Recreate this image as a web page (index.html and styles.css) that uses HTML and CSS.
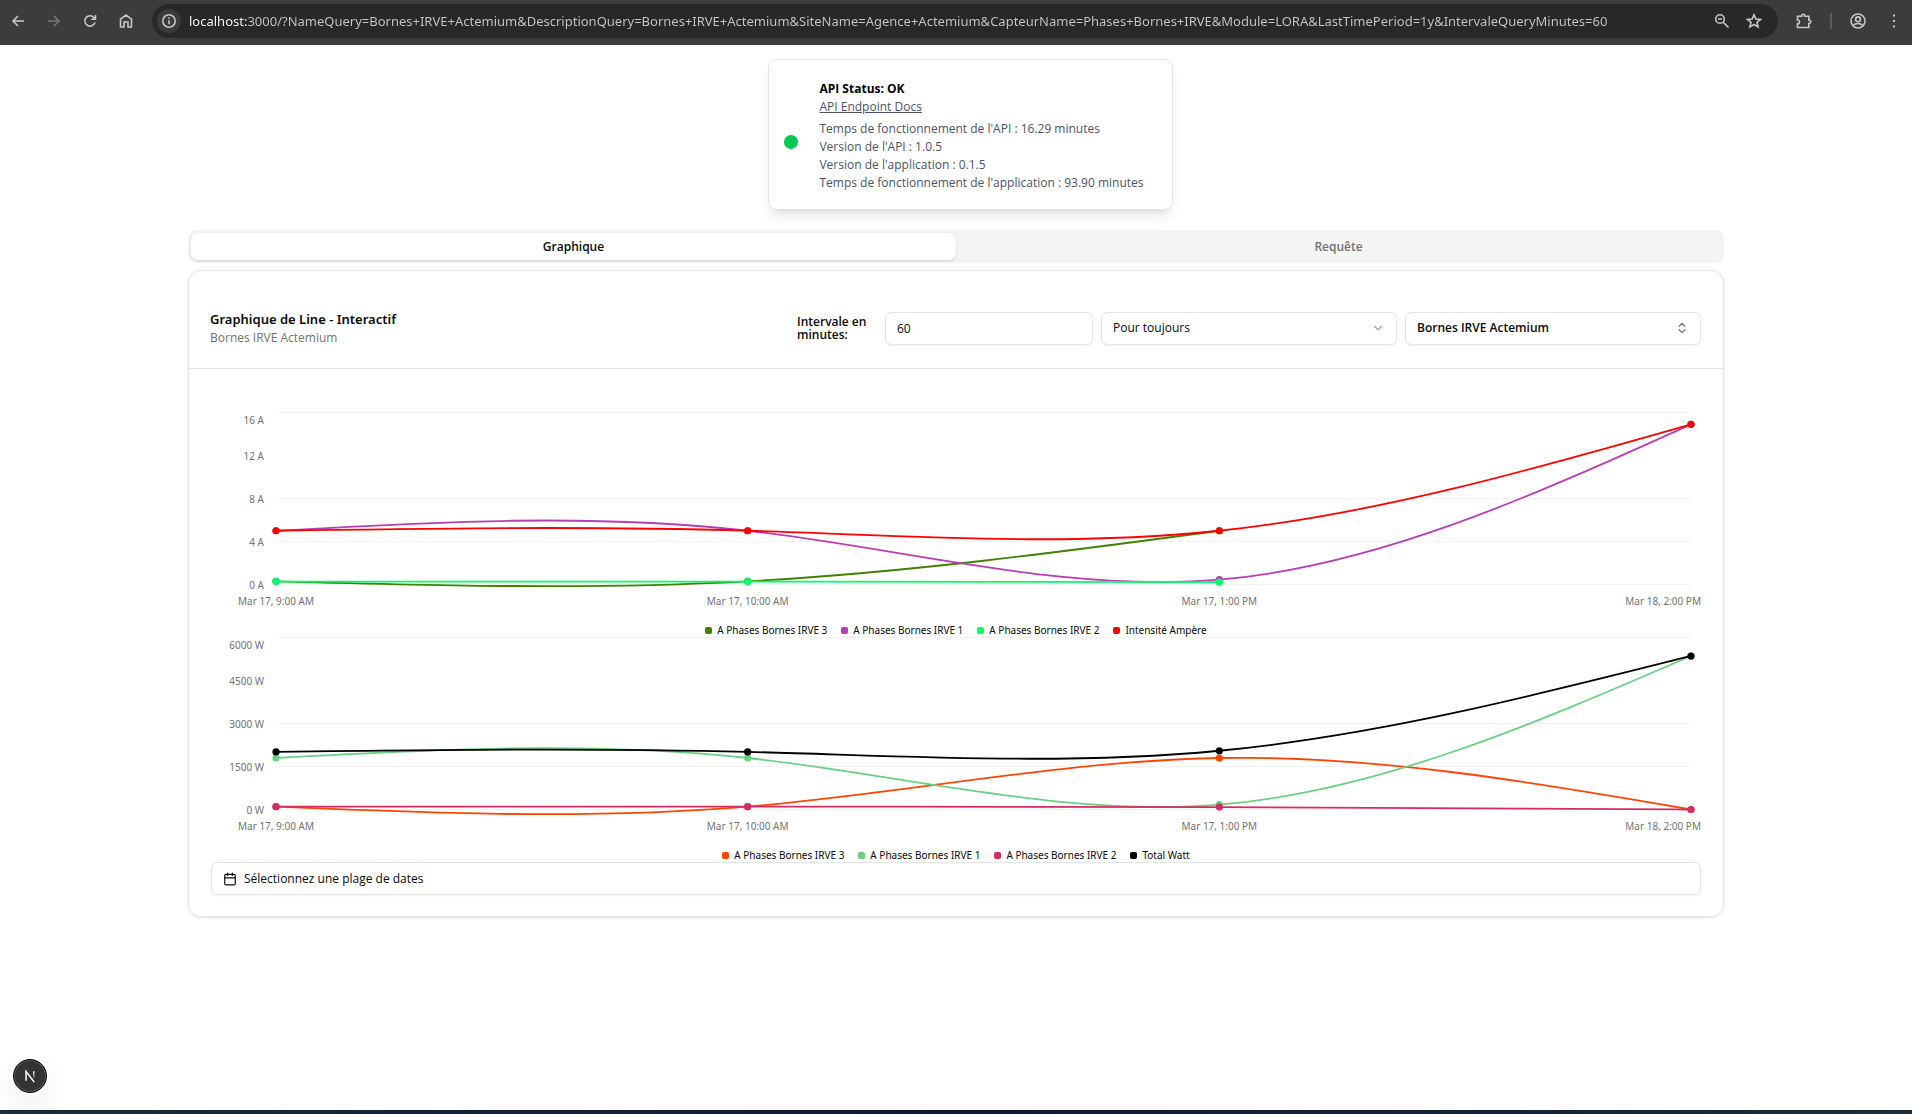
FILE: index.html
```html
<!DOCTYPE html>
<html lang="fr">
<head>
    <meta charset="UTF-8">
    <meta name="viewport" content="width=device-width, initial-scale=1.0">
    <title>Graphique - Bornes IRVE Actemium</title>
    <link rel="stylesheet" href="styles.css">
</head>
<body>
    <!-- Browser bar -->
    <header class="browser-bar">
        <nav class="browser-nav">
            <button class="icon-btn" aria-label="Back"><svg viewBox="0 0 16 16"><path d="M14 8H3M8 3L3 8l5 5"/></svg></button>
            <button class="icon-btn disabled" aria-label="Forward"><svg viewBox="0 0 16 16"><path d="M2 8h11M8 3l5 5-5 5"/></svg></button>
            <button class="icon-btn" aria-label="Reload"><svg viewBox="0 0 16 16"><path d="M13 9.500A5.200 5.200 0 1 1 12 4.500L13.300 6M13.500 2v4.300H9.200"/></svg></button>
            <button class="icon-btn" aria-label="Home"><svg viewBox="0 0 16 16"><path d="M2.500 14V6.200L8 2l5.500 4.200V14H10V9H6v5z"/></svg></button>
        </nav>
        <div class="address">
            <button class="icon-btn site-info" aria-label="Site information"><svg viewBox="0 0 16 16"><circle cx="8" cy="8" r="6.200"/><path d="M8 7.300v4M8 4.600v1.400"/></svg></button>
            <input class="url" type="text" aria-label="Address" value="localhost:3000/?NameQuery=Bornes+IRVE+Actemium&amp;DescriptionQuery=Bornes+IRVE+Actemium&amp;SiteName=Agence+Actemium&amp;CapteurName=Phases+Bornes+IRVE&amp;Module=LORA&amp;LastTimePeriod=1y&amp;IntervaleQueryMinutes=60">
            <button class="icon-btn" aria-label="Zoom"><svg viewBox="0 0 16 16"><circle cx="6" cy="6" r="4.300"/><path d="M9.200 9.200L14.500 14.500M4 6h4"/></svg></button>
            <button class="icon-btn" aria-label="Bookmark"><svg viewBox="0 0 16 16"><path d="M8 1.800l1.900 4.200 4.600.4-3.500 3 1.100 4.500L8 11.500l-4.100 2.400L5 9.400l-3.500-3 4.600-.4z"/></svg></button>
        </div>
        <div class="browser-tools">
            <button class="icon-btn" aria-label="Extensions"><svg viewBox="0 0 16 16"><path d="M1.500 3.200h4.300V2.700a1.500 1.500 0 0 1 3 0v.5h4v4h.5a1.500 1.500 0 0 1 0 3h-.5v4.300H1.500v-3.700a1.900 1.900 0 0 0 0-3.800z"/></svg></button>
            <span class="divider"></span>
            <button class="icon-btn" aria-label="Profile"><svg viewBox="0 0 16 16"><circle cx="8" cy="8" r="7"/><circle cx="8" cy="6.300" r="2.400"/><path d="M3.200 12.600c2.300-2.800 7.300-2.800 9.600 0"/></svg></button>
            <button class="icon-btn" aria-label="Menu"><svg viewBox="0 0 16 16"><path class="fill" d="M7 1.500h2v2H7zM7 7h2v2H7zM7 12.500h2v2H7z"/></svg></button>
        </div>
    </header>

    <main class="page">
        <div class="status-row">
            <section class="status-card">
                <span class="status-dot"></span>
                <div class="status-text">
                    <h2>API Status: OK</h2>
                    <a href="#docs">API Endpoint Docs</a>
                    <div class="status-lines">
                        <p>Temps de fonctionnement de l'API : 16.29 minutes</p>
                        <p>Version de l'API : 1.0.5</p>
                        <p>Version de l'application : 0.1.5</p>
                        <p>Temps de fonctionnement de l'application : 93.90 minutes</p>
                    </div>
                </div>
            </section>
        </div>

        <div class="tabs" role="tablist">
            <button class="tab active" role="tab" aria-selected="true">Graphique</button>
            <button class="tab" role="tab" aria-selected="false">Requête</button>
        </div>

        <section class="card">
            <div class="card-header">
                <div class="card-title">
                    <h1>Graphique de Line - Interactif</h1>
                    <p>Bornes IRVE Actemium</p>
                </div>
                <div class="controls">
                    <label for="interval">Intervale en minutes:</label>
                    <input class="field interval" id="interval" type="text" value="60">
                    <div class="select-wrap">
                        <select class="field" aria-label="Période">
                            <option>Pour toujours</option>
                        </select>
                        <svg class="chevron" viewBox="0 0 24 24"><path d="M6 9l6 6 6-6"/></svg>
                    </div>
                    <button class="field combo">
                        Bornes IRVE Actemium
                        <svg class="updown" viewBox="0 0 24 24"><path d="M7 15l5 5 5-5M7 9l5-5 5 5"/></svg>
                    </button>
                </div>
            </div>

            <div class="card-body">
                <div class="chart">
                    <svg class="plot" id="ampChart"></svg>
                    <ul class="legend" id="ampLegend"></ul>
                </div>
                <div class="chart">
                    <svg class="plot" id="wattChart"></svg>
                    <ul class="legend" id="wattLegend"></ul>
                </div>
                <button class="field date-btn">
                    <svg class="calendar" viewBox="0 0 24 24"><path d="M8 2v4M16 2v4M3 10h18"/><rect x="3" y="4" width="18" height="18" rx="2"/></svg>
                    Sélectionnez une plage de dates
                </button>
            </div>
        </section>
    </main>

    <button class="next-badge" aria-label="Next.js Dev Tools">
        <svg viewBox="0 0 34 34">
            <defs>
                <linearGradient id="fade" x1="0" y1="0" x2="0" y2="1">
                    <stop offset="0" stop-color="#fff"/>
                    <stop offset="1" stop-color="#fff" stop-opacity="0.100"/>
                </linearGradient>
            </defs>
            <path d="M12.800 22V12.200L21.500 23.500" fill="none" stroke="#fff" stroke-width="1.600"/>
            <rect x="20.200" y="12" width="1.600" height="8" fill="url(#fade)"/>
        </svg>
    </button>
    <footer class="taskbar"></footer>

    <script src="chart.js"></script>
</body>
</html>
```
FILE: styles.css
```css
* {
    box-sizing: border-box;
}

body {
    margin: 0;
    min-height: 100vh;
    display: flex;
    flex-direction: column;
    background-color: #fff;
    color: #0a0a0a;
    font-family: "Open Sans", "Noto Sans", sans-serif;
    font-size: 12px;
    line-height: 18px;
}

h1, h2, p, ul {
    margin: 0;
    padding: 0;
}

button, input, select {
    font: inherit;
    color: inherit;
    margin: 0;
}

/* Browser bar */
.browser-bar {
    display: flex;
    align-items: center;
    height: 45px;
    padding: 0 8px 3px;
    background-color: #3c3c3c;
}

.browser-nav {
    display: flex;
    gap: 16px;
    margin-right: 16px;
}

.icon-btn {
    display: flex;
    align-items: center;
    justify-content: center;
    flex: none;
    width: 20px;
    height: 20px;
    padding: 0;
    border: none;
    background: none;
    color: #c7c7c7;
}

.icon-btn svg {
    width: 16px;
    height: 16px;
    fill: none;
    stroke: currentColor;
    stroke-width: 1.6;
}

.icon-btn .fill {
    fill: currentColor;
    stroke: none;
}

.icon-btn.disabled {
    color: #777;
}

.address {
    flex: 1;
    display: flex;
    align-items: center;
    gap: 12px;
    height: 34px;
    padding: 0 14px 0 5px;
    border-radius: 17px;
    background-color: #282828;
}

.site-info {
    width: 24px;
    height: 24px;
    margin-right: -4px;
    border-radius: 50%;
    background-color: #3c3c3c;
}

.url {
    flex: 1;
    min-width: 0;
    padding: 0;
    border: none;
    outline: none;
    font-family: "Noto Sans", sans-serif;
    font-size: 13px;
    line-height: 20px;
    color: transparent;
    background: linear-gradient(to right, #fff 58px, #c7c7c7 58px);
    -webkit-background-clip: text;
    background-clip: text;
}

.browser-tools {
    display: flex;
    align-items: center;
    gap: 16px;
    padding-left: 16px;
}

.divider {
    width: 2px;
    height: 16px;
    background-color: #5c5c5c;
}

/* API status */
.page {
    width: 100%;
    max-width: 1536px;
    margin: 0 auto;
    padding-top: 14px;
}

.status-row {
    display: flex;
    justify-content: center;
    padding-left: 29px;
    margin-bottom: 20px;
}

.status-card {
    display: flex;
    align-items: center;
    gap: 21px;
    padding: 20px 28px 17px 15px;
    border: 1px solid #e5e5e5;
    border-radius: 9px;
    box-shadow: 0 9px 14px -3px rgba(0, 0, 0, 0.1), 0 4px 5px -4px rgba(0, 0, 0, 0.1);
}

.status-dot {
    width: 14px;
    height: 14px;
    margin-top: 12px;
    border-radius: 50%;
    background-color: #00c951;
}

.status-text {
    color: #4a5565;
}

.status-text h2 {
    font-size: 12px;
    font-weight: 700;
    line-height: 18px;
    color: #000;
}

.status-text a {
    color: inherit;
}

.status-lines {
    margin-top: 4px;
}

/* Tabs */
.tabs {
    display: flex;
    height: 33px;
    padding: 3px;
    margin-bottom: 7px;
    border-radius: 9px;
    background-color: #f4f4f4;
}

.tab {
    flex: 1;
    border: none;
    border-radius: 7px;
    background: none;
    color: #737373;
    font-weight: 600;
}

.tab.active {
    background-color: #fff;
    color: #0a0a0a;
    box-shadow: 0 1px 3px rgba(0, 0, 0, 0.15);
}

/* Chart card */
.card {
    border: 1px solid #e5e5e5;
    border-radius: 13px;
    box-shadow: 0 1px 3px rgba(0, 0, 0, 0.12);
}

.card-header {
    display: flex;
    align-items: center;
    justify-content: space-between;
    padding: 38px 22px 21px 21px;
    border-bottom: 1px solid #e5e5e5;
}

.card-title h1 {
    font-family: "Noto Sans", sans-serif;
    font-size: 13px;
    font-weight: 600;
    line-height: 20px;
}

.card-title p {
    color: #737373;
}

.controls {
    display: flex;
    align-items: center;
    gap: 8px;
}

.controls label {
    width: 80px;
    font-weight: 600;
    line-height: 13px;
}

.field {
    height: 33px;
    padding: 0 11px;
    border: 1px solid #e5e5e5;
    border-radius: 7px;
    background-color: #fff;
    box-shadow: 0 1px 2px rgba(0, 0, 0, 0.06);
    outline: none;
}

.interval {
    width: 208px;
}

.select-wrap {
    position: relative;
    width: 296px;
}

.select-wrap select {
    display: block;
    width: 100%;
    appearance: none;
}

.field svg,
.chevron {
    width: 14px;
    height: 14px;
    fill: none;
    stroke: currentColor;
    stroke-width: 2;
    stroke-linecap: round;
    stroke-linejoin: round;
}

.chevron {
    position: absolute;
    right: 12px;
    top: 9px;
    opacity: 0.4;
    pointer-events: none;
}

.combo {
    display: flex;
    align-items: center;
    justify-content: space-between;
    width: 296px;
    font-weight: 600;
}

.field .updown {
    opacity: 0.6;
}

.card-body {
    padding: 39px 22px 21px;
}

.chart {
    height: 225px;
}

.plot {
    display: block;
    width: 100%;
    height: 213px;
    overflow: visible;
}

.plot text {
    font-family: "Noto Sans", sans-serif;
    font-size: 10px;
    fill: #737373;
}

.plot .grid {
    stroke: #f3f3f3;
}

.plot .line {
    fill: none;
    stroke-width: 1.8;
}

.legend {
    display: flex;
    justify-content: center;
    gap: 14px;
    list-style: none;
    font-family: "Noto Sans", sans-serif;
    font-size: 10px;
}

.legend li {
    display: flex;
    align-items: center;
    gap: 5px;
}

.swatch {
    width: 7px;
    height: 7px;
    border-radius: 2px;
}

.date-btn {
    display: flex;
    align-items: center;
    gap: 7px;
    width: 100%;
    margin-top: 4px;
}

/* Dev tools badge */
.next-badge {
    position: fixed;
    left: 13px;
    bottom: 21px;
    width: 34px;
    height: 34px;
    padding: 0;
    border: 1px solid #111;
    border-radius: 50%;
    background-color: #333;
    box-shadow: inset 0 0 0 1px #555, 0 14px 28px rgba(0, 0, 0, 0.08);
}

.next-badge svg {
    display: block;
    width: 32px;
    height: 32px;
}

.taskbar {
    height: 4px;
    margin-top: auto;
    background: linear-gradient(to right, #1c2b3a, #10163a 50%, #1c2b3a);
}
```
FILE: chart.js
```javascript
const labels = ["Mar 17, 9:00 AM", "Mar 17, 10:00 AM", "Mar 17, 1:00 PM", "Mar 18, 2:00 PM"];

const ampSeries = [
    { name: "A Phases Bornes IRVE 3", color: "#418000", values: [0.3, 0.3, 5] },
    { name: "A Phases Bornes IRVE 1", color: "#b93fb0", values: [5, 5, 0.45, 14.9] },
    { name: "A Phases Bornes IRVE 2", color: "#00ff6a", values: [0.27, 0.27, 0.22] },
    { name: "Intensité Ampère", color: "#ff0000", values: [5, 5, 5, 14.9] }
];

const wattSeries = [
    { name: "A Phases Bornes IRVE 3", color: "#ff4500", values: [100, 100, 1797, 0] },
    { name: "A Phases Bornes IRVE 1", color: "#69d183", values: [1797, 1797, 170, 5355] },
    { name: "A Phases Bornes IRVE 2", color: "#d62c66", values: [100, 100, 85, 0] },
    { name: "Total Watt", color: "#000000", values: [2010, 2010, 2050, 5355] }
];

// Control points of a natural cubic spline, for one axis
function controlPoints(x) {
    const n = x.length - 1;
    const a = [0], b = [2], r = [x[0] + 2 * x[1]];
    for (let i = 1; i < n - 1; i++) {
        a[i] = 1;
        b[i] = 4;
        r[i] = 4 * x[i] + 2 * x[i + 1];
    }
    a[n - 1] = 2;
    b[n - 1] = 7;
    r[n - 1] = 8 * x[n - 1] + x[n];
    for (let i = 1; i < n; i++) {
        const m = a[i] / b[i - 1];
        b[i] -= m;
        r[i] -= m * r[i - 1];
    }
    a[n - 1] = r[n - 1] / b[n - 1];
    for (let i = n - 2; i >= 0; i--) {
        a[i] = (r[i] - a[i + 1]) / b[i];
    }
    b[n - 1] = (x[n] + a[n - 1]) / 2;
    for (let i = 0; i < n - 1; i++) {
        b[i] = 2 * x[i + 1] - a[i + 1];
    }
    return [a, b];
}

function linePath(xs, ys) {
    const [ax, bx] = controlPoints(xs);
    const [ay, by] = controlPoints(ys);
    let d = `M${xs[0]},${ys[0]}`;
    for (let i = 0; i < xs.length - 1; i++) {
        d += `C${ax[i]},${ay[i]} ${bx[i]},${by[i]} ${xs[i + 1]},${ys[i + 1]}`;
    }
    return d;
}

function drawChart(id, series, max, unit) {
    const svg = document.getElementById(id);
    const width = svg.clientWidth;
    const left = 65, right = width - 10, top = 4.5, bottom = 176.5;
    const yOf = v => bottom - (v / max) * (bottom - top);
    const xOf = i => left + (i * (right - left)) / (labels.length - 1);
    let html = "";

    [0, 0.25, 0.5, 0.75, 1].forEach(part => {
        const y = yOf(part * max);
        if (part !== 0.75) {
            html += `<line class="grid" x1="${left}" x2="${right}" y1="${y}" y2="${y}"/>`;
        }
        // the top label is kept inside the chart
        const textY = Math.max(y, 12) + 4;
        html += `<text x="${left - 12}" y="${textY}" text-anchor="end">${part * max} ${unit}</text>`;
    });

    labels.forEach((label, i) => {
        const last = i === labels.length - 1;
        html += `<text x="${last ? width : xOf(i)}" y="197" text-anchor="${last ? "end" : "middle"}">${label}</text>`;
    });

    series.forEach(s => {
        const xs = s.values.map((v, i) => xOf(i));
        const ys = s.values.map(yOf);
        html += `<path class="line" stroke="${s.color}" d="${linePath(xs, ys)}"/>`;
        xs.forEach((x, i) => {
            html += `<circle cx="${x}" cy="${ys[i]}" r="3.6" fill="${s.color}"/>`;
        });
    });

    svg.innerHTML = html;
}

function drawLegend(id, series) {
    document.getElementById(id).innerHTML = series.map(s =>
        `<li><span class="swatch" style="background-color: ${s.color}"></span>${s.name}</li>`
    ).join("");
}

function render() {
    drawChart("ampChart", ampSeries, 16, "A");
    drawChart("wattChart", wattSeries, 6000, "W");
}

drawLegend("ampLegend", ampSeries);
drawLegend("wattLegend", wattSeries);
render();
window.addEventListener("resize", render);
```
